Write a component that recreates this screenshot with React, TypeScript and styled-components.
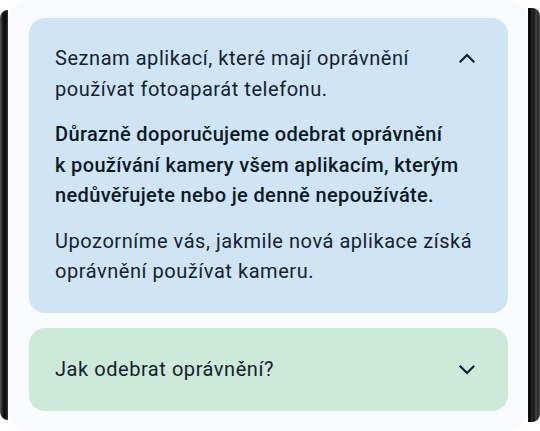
import React from "react";
import styled, { createGlobalStyle } from "styled-components";

const Global = createGlobalStyle`
  html, body { margin: 0; padding: 0; background: #ffffff; }
  body { font-family: Roboto, "Noto Sans", sans-serif; }
`;

const Screen = styled.div`
  width: 540px;
  height: 431px;
  display: flex;
  align-items: stretch;
  background: #ffffff;
  overflow: hidden;
`;

const Bezel = styled.div<{ $side: "left" | "right" }>`
  flex: 0 0 ${(p) => (p.$side === "left" ? "8px" : "12px")};
  margin: ${(p) => (p.$side === "left" ? "10px 0 11px" : "8px 0 9px")};
  border-radius: ${(p) => (p.$side === "left" ? "8px 0 0 8px" : "0 8px 8px 0")};
  background: ${(p) =>
    p.$side === "left"
      ? "linear-gradient(90deg, #5a5a5a 0px, #2a2a2a 2px, #0c0c0c 4px, #111 6px, #3a3a3a 8px)"
      : "linear-gradient(90deg, #111 0px, #050505 2px, #2b2b2b 4px, #101010 6px, #4a4a4a 8px, #222 10px, #555 12px)"};
`;

const Panel = styled.div`
  flex: 1;
  background: #f8fafd;
  border-radius: 22px;
  padding: 18px 20px 19px 21px;
  display: flex;
  flex-direction: column;
  gap: 15px;
`;

const Card = styled.section<{ $tone: "blue" | "green" }>`
  background: ${(p) => (p.$tone === "blue" ? "#cfe5f5" : "#cde9d8")};
  border-radius: 16px;
  padding: ${(p) => (p.$tone === "blue" ? "25px 26px 26px" : "26px 26px 27px")};
  display: flex;
  flex-direction: column;
  gap: 15px;
  color: #0e1d2a;
`;

const Header = styled.div`
  display: flex;
  align-items: flex-start;
  justify-content: space-between;
  gap: 4px;
`;

const Text = styled.p<{ $bold?: boolean }>`
  margin: 0;
  font-size: 20px;
  line-height: 30.5px;
  letter-spacing: ${(p) => (p.$bold ? "0.35px" : "0.55px")};
  font-weight: ${(p) => (p.$bold ? 500 : 400)};
  color: ${(p) => (p.$bold ? "#0b1a26" : "#14232f")};
`;

const Chevron = styled.svg<{ $offset: number }>`
  flex: 0 0 auto;
  width: 24px;
  height: 24px;
  margin-top: ${(p) => p.$offset}px;
  margin-right: 3px;
`;

const ChevronIcon = ({ up, offset }: { up?: boolean; offset: number }) => (
  <Chevron $offset={offset} viewBox="0 0 24 24" fill="none" stroke="#102030" strokeWidth={2.2} strokeLinecap="square">
    {up ? <path d="M5.5 15.5 L12 9 L18.5 15.5" /> : <path d="M5.5 9.5 L12 16 L18.5 9.5" />}
  </Chevron>
);

export default function App() {
  return (
    <Screen>
      <Global />
      <Bezel $side="left" />
      <Panel>
        <Card $tone="blue">
          <Header>
            <Text>Seznam aplikací, které mají oprávnění používat fotoaparát telefonu.</Text>
            <ChevronIcon up offset={3} />
          </Header>
          <Text $bold>
            Důrazně doporučujeme odebrat oprávnění k{"\u00A0"}používání kamery všem aplikacím, kterým nedůvěřujete nebo je denně nepoužíváte.
          </Text>
          <Text>Upozorníme vás, jakmile nová aplikace získá oprávnění používat kameru.</Text>
        </Card>
        <Card $tone="green">
          <Header>
            <Text>Jak odebrat oprávnění?</Text>
            <ChevronIcon offset={3} />
          </Header>
        </Card>
      </Panel>
      <Bezel $side="right" />
    </Screen>
  );
}
